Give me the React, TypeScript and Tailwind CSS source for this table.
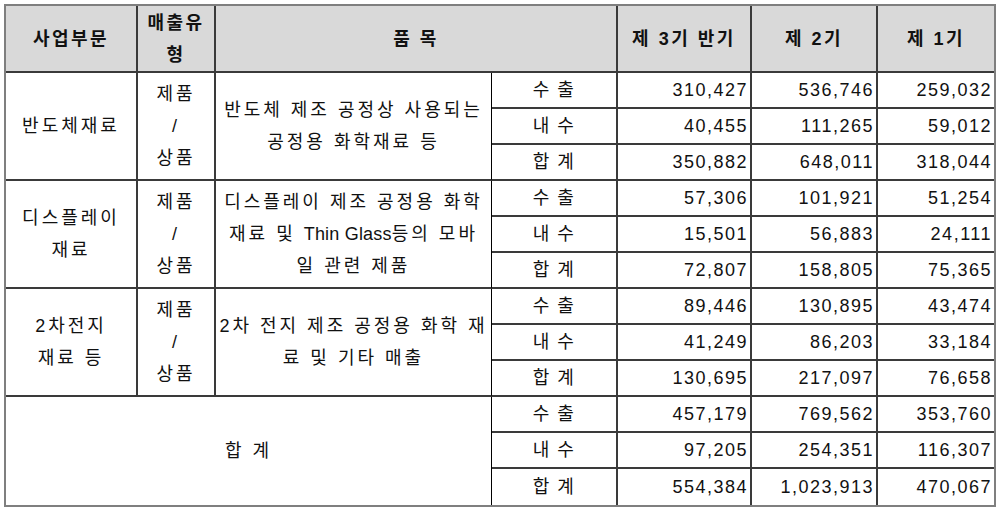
import React from "react";

interface Group {
  name: string[];
  desc: React.ReactNode[];
  values: string[][];
}

const groups: Group[] = [
  {
    name: ["반도체재료"],
    desc: ["반도체 제조 공정상 사용되는", "공정용 화학재료 등"],
    values: [
      ["310,427", "536,746", "259,032"],
      ["40,455", "111,265", "59,012"],
      ["350,882", "648,011", "318,044"],
    ],
  },
  {
    name: ["디스플레이", "재료"],
    desc: [
      "디스플레이 제조 공정용 화학",
      <>
        재료 및 <span className="tracking-[0.2px]">Thin Glass</span>등의 모바
      </>,
      "일 관련 제품",
    ],
    values: [
      ["57,306", "101,921", "51,254"],
      ["15,501", "56,883", "24,111"],
      ["72,807", "158,805", "75,365"],
    ],
  },
  {
    name: ["2차전지", "재료 등"],
    desc: ["2차 전지 제조 공정용 화학 재", "료 및 기타 매출"],
    values: [
      ["89,446", "130,895", "43,474"],
      ["41,249", "86,203", "33,184"],
      ["130,695", "217,097", "76,658"],
    ],
  },
];

const total = [
  ["457,179", "769,562", "353,760"],
  ["97,205", "254,351", "116,307"],
  ["554,384", "1,023,913", "470,067"],
];

const labels = ["수 출", "내 수", "합 계"];

const lines = (items: React.ReactNode[]) =>
  items.map((t, i) => (
    <React.Fragment key={i}>
      {i > 0 && <br />}
      {t}
    </React.Fragment>
  ));

const cell = "border-b-2 border-r-2 border-[#3a3a3a] p-0";
const head = `${cell} text-center tracking-[2.5px]`;
const ko = "tracking-[3px] whitespace-nowrap";

const App = () => {
  return (
    <div className="min-h-[511px] w-[1000px] bg-white pt-[4px] pl-[4px]">
      <div className="w-[992px] border-2 border-[#7f7f7f]">
        <table
          className="w-[988px] table-fixed border-separate border-spacing-0 text-[18px] leading-[32px] tracking-[1.5px] text-[#111]"
          style={{ fontFamily: '"Liberation Sans", "Noto Sans CJK KR", sans-serif' }}
        >
          <colgroup>
            <col className="w-[132px]" />
            <col className="w-[78px]" />
            <col className="w-[276px]" />
            <col className="w-[126px]" />
            <col className="w-[134px]" />
            <col className="w-[126px]" />
            <col className="w-[116px]" />
          </colgroup>
          <thead>
            <tr className="h-[67px] bg-[#d9d9d9] font-bold">
              <th className={head}>사업부문</th>
              <th className={head}>
                매출유
                <br />형
              </th>
              <th colSpan={2} className={head}>
                품 목
              </th>
              <th className={head}>제 3기 반기</th>
              <th className={head}>제 2기</th>
              <th className="border-b-2 border-[#3a3a3a] p-0 text-center tracking-[2.5px]">제 1기</th>
            </tr>
          </thead>
          <tbody>
            {groups.map((g, gi) =>
              g.values.map((vals, ri) => (
                <tr key={`${gi}-${ri}`} className="h-[36px]">
                  {ri === 0 && (
                    <>
                      <td rowSpan={3} className={`${cell} text-center ${ko}`}>
                        {lines(g.name)}
                      </td>
                      <td rowSpan={3} className={`${cell} text-center ${ko}`}>
                        제품
                        <br />/
                        <br />
                        상품
                      </td>
                      <td
                        rowSpan={3}
                        className={`border-b-2 border-r border-[#3a3a3a] border-r-black p-0 text-center ${ko}`}
                      >
                        {lines(g.desc)}
                      </td>
                    </>
                  )}
                  <td className={`${cell} text-center`}>{labels[ri]}</td>
                  {vals.map((v, i) => (
                    <td
                      key={i}
                      className={`border-b-2 border-[#3a3a3a] p-0 pr-[2px] text-right ${i < 2 ? "border-r-2" : ""}`}
                    >
                      {v}
                    </td>
                  ))}
                </tr>
              ))
            )}
            {total.map((vals, ri) => {
              const last = ri === total.length - 1;
              return (
                <tr key={`t-${ri}`} className="h-[36px]">
                  {ri === 0 && (
                    <td
                      rowSpan={3}
                      colSpan={3}
                      className={`border-r border-r-black p-0 text-center ${ko}`}
                    >
                      합 계
                    </td>
                  )}
                  <td
                    className={`border-r-2 border-[#3a3a3a] p-0 text-center ${last ? "" : "border-b-2"}`}
                  >
                    {labels[ri]}
                  </td>
                  {vals.map((v, i) => (
                    <td
                      key={i}
                      className={`border-[#3a3a3a] p-0 pr-[2px] text-right ${i < 2 ? "border-r-2" : ""} ${last ? "" : "border-b-2"}`}
                    >
                      {v}
                    </td>
                  ))}
                </tr>
              );
            })}
          </tbody>
        </table>
      </div>
    </div>
  );
};

export default App;
